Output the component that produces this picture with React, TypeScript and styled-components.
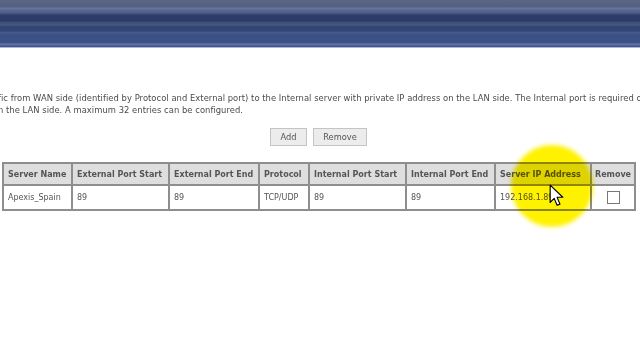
import styled, { createGlobalStyle } from "styled-components"

const GlobalStyle = createGlobalStyle`
  html, body {
    margin: 0;
    padding: 0;
    background: #fff;
    overflow: hidden;
  }
  body {
    width: 640px;
    height: 360px;
    font-family: "DejaVu Sans", Verdana, sans-serif;
  }
`

const Page = styled.div`
  width: 640px;
  height: 360px;
  overflow: hidden;
  position: relative;
`

const Banner = styled.div`
  height: 47px;
  border-bottom: 1px solid #a9b8d6;
  background: linear-gradient(
    to bottom,
    #5b6583 0px,
    #535f83 7px,
    #6a789e 8px,
    #5a688f 10px,
    #4c5c88 13px,
    #2e3d69 15px,
    #2a3a66 21px,
    #3c4c7a 22px,
    #46577f 25px,
    #314371 27px,
    #34477b 31px,
    #4c5e8c 33px,
    #3b5086 34px,
    #3c5187 43px,
    #6c7ea8 44px,
    #43568c 46px
  );
`

const Intro = styled.div`
  margin-top: 44px;
  margin-left: -2px;
  font-size: 8.4px;
  letter-spacing: 0.04px;
  line-height: 12px;
  color: #4a4a4a;
`

const Line = styled.div`
  white-space: nowrap;
`

const Actions = styled.div`
  display: flex;
  gap: 6px;
  margin-top: 12px;
  padding-left: 270px;
`

const Button = styled.div<{ $w: number }>`
  width: ${(p) => p.$w}px;
  height: 18px;
  box-sizing: border-box;
  display: flex;
  align-items: center;
  justify-content: center;
  background: #ececec;
  border: 1px solid #c4c4c4;
  font-size: 8.25px;
  color: #555;
`

const TableWrap = styled.div`
  position: relative;
  margin-top: 16px;
  margin-left: 2px;
`

const Table = styled.table`
  width: 632px;
  table-layout: fixed;
  border-collapse: collapse;
  border: 2px solid #8e8e8e;
  font-size: 8px;
`

const Th = styled.th<{ $center?: boolean }>`
  height: 20px;
  padding: ${(p) => (p.$center ? "0" : "0 4px")};
  background: #dedede;
  border: 2px solid #8e8e8e;
  color: #555;
  font-weight: bold;
  text-align: ${(p) => (p.$center ? "center" : "left")};
  white-space: nowrap;
  overflow: hidden;
`

const Td = styled.td<{ $center?: boolean }>`
  height: 23px;
  padding: 0 4px;
  background: #fff;
  border: 2px solid #8e8e8e;
  color: #555;
  text-align: ${(p) => (p.$center ? "center" : "left")};
  white-space: nowrap;
`

const Check = styled.span`
  display: inline-block;
  width: 11px;
  height: 11px;
  border: 1px solid #777;
  background: #fff;
  vertical-align: middle;
`

const Highlight = styled.div`
  position: absolute;
  left: 509px;
  top: -17px;
  width: 82px;
  height: 82px;
  border-radius: 50%;
  background: #fff200;
  mix-blend-mode: multiply;
  filter: blur(2px);
  pointer-events: none;
`

const Cursor = styled.svg`
  position: absolute;
  left: 547px;
  top: 22px;
  pointer-events: none;
`

const columns = [
  { title: "Server Name", width: 69 },
  { title: "External Port Start", width: 97 },
  { title: "External Port End", width: 90 },
  { title: "Protocol", width: 50 },
  { title: "Internal Port Start", width: 97 },
  { title: "Internal Port End", width: 89 },
  { title: "Server IP Address", width: 96 },
  { title: "Remove", width: 44, center: true },
]

const rows = [
  {
    name: "Apexis_Spain",
    extStart: "89",
    extEnd: "89",
    protocol: "TCP/UDP",
    intStart: "89",
    intEnd: "89",
    ip: "192.168.1.89",
  },
]

export default function App() {
  return (
    <Page>
      <GlobalStyle />
      <Banner />
      <Intro>
        <Line>
          fic from WAN side (identified by Protocol and External port) to the Internal server with private IP address on the LAN side. The Internal port is required only if the external port needs to be converted
        </Line>
        <Line>n the LAN side. A maximum 32 entries can be configured.</Line>
      </Intro>
      <Actions>
        <Button $w={37}>Add</Button>
        <Button $w={54}>Remove</Button>
      </Actions>
      <TableWrap>
        <Table>
          <colgroup>
            {columns.map((c) => (
              <col key={c.title} style={{ width: c.width }} />
            ))}
          </colgroup>
          <thead>
            <tr>
              {columns.map((c) => (
                <Th key={c.title} $center={c.center}>
                  {c.title}
                </Th>
              ))}
            </tr>
          </thead>
          <tbody>
            {rows.map((r) => (
              <tr key={r.name}>
                <Td>{r.name}</Td>
                <Td>{r.extStart}</Td>
                <Td>{r.extEnd}</Td>
                <Td>{r.protocol}</Td>
                <Td>{r.intStart}</Td>
                <Td>{r.intEnd}</Td>
                <Td>{r.ip}</Td>
                <Td $center>
                  <Check />
                </Td>
              </tr>
            ))}
          </tbody>
        </Table>
        <Highlight />
        <Cursor width="15" height="23" viewBox="0 0 13 20">
          <path
            d="M1 1 L1 16 L4.5 12.5 L7 18.5 L9.5 17.5 L7 11.5 L12 11.5 Z"
            fill="#fff"
            stroke="#000"
            strokeWidth="1"
            strokeLinejoin="round"
          />
        </Cursor>
      </TableWrap>
    </Page>
  )
}
